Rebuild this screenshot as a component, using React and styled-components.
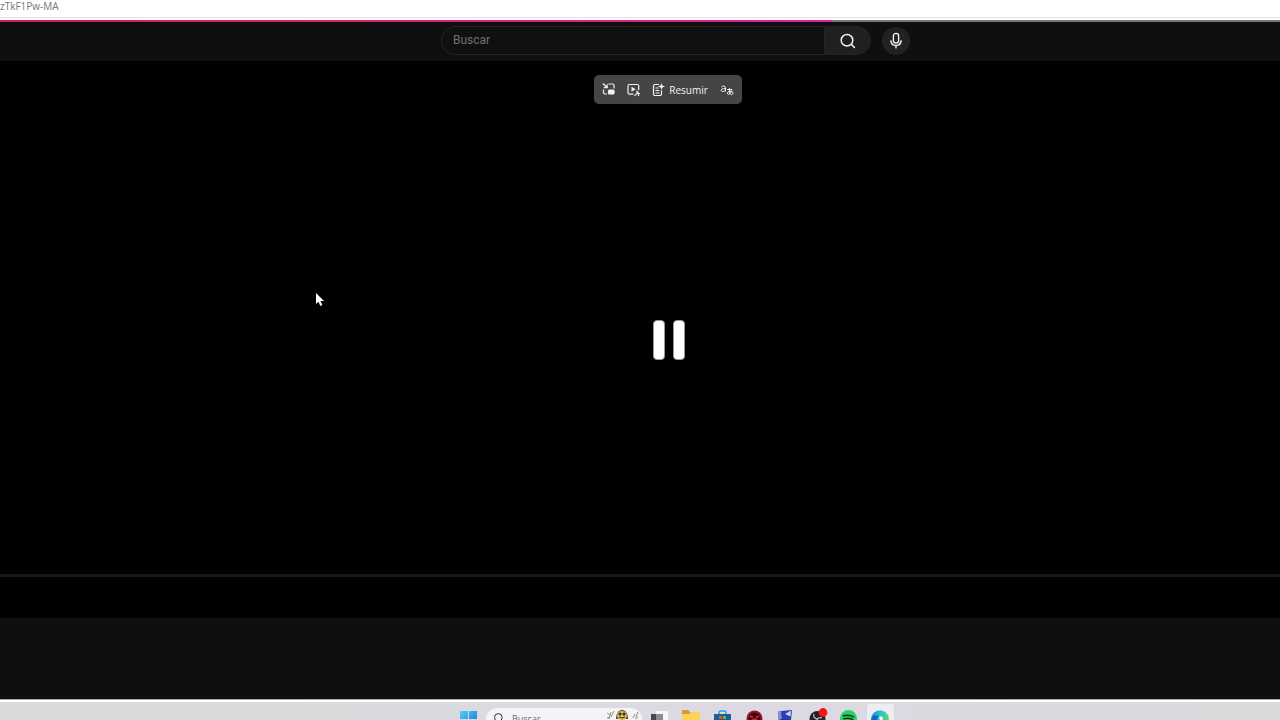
import React from 'react';
import styled, { createGlobalStyle } from 'styled-components';

const GlobalStyle = createGlobalStyle`
  * {
    box-sizing: border-box;
  }
  body {
    margin: 0;
    background: #000000;
    font-family: "Open Sans", "Noto Sans", sans-serif;
  }
  button {
    border: 0;
    padding: 0;
    background: none;
    color: inherit;
    font-family: inherit;
  }
  svg {
    display: block;
    flex: none;
  }
`;

const Page = styled.div`
  position: relative;
  display: flex;
  flex-direction: column;
  height: 100vh;
  overflow: hidden;
`;

const AddressBar = styled.div`
  flex: none;
  height: 18px;
  background: #ffffff;
  border-bottom: 1px solid #e4dfe6;
  color: #77777a;
  font-size: 10px;
  line-height: 13px;
`;

const LoadingTrack = styled.div`
  flex: none;
  height: 4px;
  padding-top: 2px;
  background: linear-gradient(#ffffff 2px, #77777a 2px);
`;

const LoadingBar = styled.div`
  width: 65%;
  height: 2px;
  background: linear-gradient(90deg, #c92455, #d62878 60%, #e020a0);
`;

const Masthead = styled.header`
  flex: none;
  display: flex;
  align-items: center;
  justify-content: center;
  gap: 11px;
  height: 39px;
  padding: 0 0 2px 71px;
  background: #0f0f0f;
`;

const SearchForm = styled.form`
  display: flex;
  width: 430px;
  height: 29px;
`;

const SearchInput = styled.input`
  flex: 1;
  min-width: 0;
  padding: 0 11px 2px;
  border: 1px solid #242424;
  border-right: 0;
  border-radius: 15px 0 0 15px;
  background: #101010;
  color: #eeeeee;
  font-family: Roboto, sans-serif;
  font-size: 12px;
  &::placeholder {
    color: #707070;
    opacity: 1;
  }
`;

const SearchButton = styled.button`
  display: flex;
  align-items: center;
  justify-content: center;
  width: 47px;
  border: 1px solid #242424;
  border-radius: 0 15px 15px 0;
  background: #202020;
  color: #f1f1f1;
`;

const VoiceButton = styled.button`
  display: flex;
  align-items: center;
  justify-content: center;
  width: 28px;
  height: 28px;
  border-radius: 50%;
  background: #222222;
  color: #f1f1f1;
`;

const Player = styled.main`
  flex: 1;
  display: flex;
  flex-direction: column;
  align-items: center;
  padding-top: 14px;
  background: #000000;
`;

const VideoToolbar = styled.div`
  display: flex;
  align-items: center;
  height: 29px;
  margin-left: 56px;
  padding: 0 8px;
  gap: 12px;
  border-radius: 5px;
  background: #454545;
  color: #f2f2f2;
`;

const ToolButton = styled.button`
  display: flex;
  align-items: center;
  gap: 4px;
  height: 24px;
  font-size: 10px;
  line-height: 14px;
`;

const Stage = styled.div`
  flex: 1;
  display: flex;
  align-items: center;
  justify-content: center;
  padding: 1px 0 0 57px;
`;

const PauseButton = styled.button`
  display: flex;
  gap: 8px;
`;

const PauseBar = styled.span`
  width: 12px;
  height: 40px;
  border: 1px solid #999999;
  border-radius: 4px;
  background: #ffffff;
`;

const Timeline = styled.div`
  flex: none;
  align-self: stretch;
  height: 3px;
  background: #191919;
`;

const Controls = styled.div`
  flex: none;
  height: 41px;
`;

const Details = styled.section`
  flex: none;
  height: 81px;
  background: #0f0f0f;
`;

const WindowEdge = styled.div`
  flex: none;
  height: 3px;
  border-top: 1px solid #aaaaaa;
  background: #ffffff;
`;

const Taskbar = styled.footer`
  flex: none;
  display: flex;
  align-items: flex-start;
  justify-content: center;
  height: 18px;
  padding-left: 70px;
  overflow: hidden;
  background: linear-gradient(90deg, #dadada 20%, #dcd9e2 40%, #dcd9e2 65%, #dadadc);
`;

const StartButton = styled.button`
  display: flex;
  justify-content: center;
  width: 28px;
  padding-top: 9px;
`;

const TaskSearch = styled.label`
  display: flex;
  align-items: center;
  width: 156px;
  height: 22px;
  margin: 6px 2px 0 4px;
  padding: 0 2px 2px 7px;
  border-radius: 11px;
  background: #f4f3f8;
  color: #333333;
`;

const TaskInput = styled.input`
  flex: 1;
  min-width: 0;
  padding: 0 0 0 7px;
  border: 0;
  background: none;
  font-family: "Open Sans", sans-serif;
  font-size: 9px;
  &::placeholder {
    color: #6c6c70;
    opacity: 1;
  }
`;

const TaskList = styled.nav`
  display: grid;
  grid-template-columns: repeat(8, 1fr);
  justify-items: center;
  width: 252px;
`;

const TaskButton = styled.button`
  display: flex;
  justify-content: center;
  width: 27px;
  height: 32px;
  margin-top: 2px;
  padding-top: 6px;
  border-radius: 3px;
  background: ${({ $active }) => ($active ? '#eeedf3' : 'none')};
`;

const Pointer = styled.svg`
  position: absolute;
  top: 292px;
  left: 315px;
`;

const SearchIcon = ({ size = 18 }) => (
  <svg width={size} height={size} viewBox="0 0 18 18" fill="none" stroke="currentColor" strokeWidth="1.5">
    <circle cx="8" cy="8.2" r="5.8" />
    <path d="M12.2 12.300l3.600 3.600" />
  </svg>
);

const MicIcon = () => (
  <svg width="18" height="18" viewBox="0 0 18 18" fill="none" stroke="currentColor" strokeWidth="1.4">
    <rect x="6.4" y="1.4" width="5.2" height="9.6" rx="2.6" />
    <path d="M3.9 8.2c0 3.2 2.1 5.2 5.1 5.2s5.1-2 5.1-5.2M9 13.4v3.2" />
  </svg>
);

const PipIcon = () => (
  <svg width="13" height="13" viewBox="0 0 13 13" fill="none" stroke="currentColor" strokeWidth="1.2">
    <path d="M1 .5l4 4M5.2 1.200v3.400H1.800M6.500 1h4A1.500 1.500 0 0 1 12 2.500v3M1.500 6.500v3A1.500 1.500 0 0 0 3 11h2" />
    <rect x="6.500" y="7" width="5.500" height="4" rx="1" fill="currentColor" />
  </svg>
);

const EnhanceIcon = () => (
  <svg width="13" height="14" viewBox="0 0 13 14" fill="none" stroke="currentColor" strokeWidth="1.200">
    <path d="M6.500 11.200h-4A1.500 1.500 0 0 1 1 9.700V3a1.500 1.500 0 0 1 1.500-1.500h7.700A1.500 1.500 0 0 1 11.700 3v4" />
    <path d="M4.500 3.700v5l4.200-2.500z" fill="currentColor" stroke="none" />
    <path d="M7.500 12.800l4-4M10 7.500v2.500M10 10.500h3M11.500 11v2" />
  </svg>
);

const SummaryIcon = () => (
  <svg width="13" height="14" viewBox="0 0 13 14" fill="none" stroke="currentColor" strokeWidth="1.200">
    <path d="M7 1.500H3A1.500 1.500 0 0 0 1.500 3v8A1.500 1.500 0 0 0 3 12.500h5A1.500 1.500 0 0 0 9.500 11V7.500M3.500 5h3M3.500 7.500h4M3.500 10h4" />
    <path d="M9.500 0l.9 2.600 2.600.9-2.600.9-.9 2.600-.9-2.600L6 3.500l2.600-.9z" fill="currentColor" stroke="none" />
  </svg>
);

const TranslateIcon = () => (
  <svg width="14" height="14" viewBox="0 0 14 14" fill="none" stroke="currentColor" strokeWidth="1">
    <path d="M1.500 4c1-1.500 4-1.300 4 .8V8.500M5.500 5.600C3 5.500 1.200 6 1.200 7.200c0 2 3.800 1.500 4.300-.4" />
    <path d="M7.300 6.500h5M9.500 5c-.3 2.500 0 4.500.9 6.500M11.800 7.500c-.6 2-2 3.700-3.300 3.700-2 0-1.200-3 1.500-3 4 0 3.800 3 1.200 3.600" />
  </svg>
);

const WindowsIcon = () => (
  <svg width="17" height="17" viewBox="0 0 17 17">
    <defs>
      <linearGradient id="win" x2="1" y2="1">
        <stop stopColor="#55d0f5" />
        <stop offset="1" stopColor="#0c6fd0" />
      </linearGradient>
    </defs>
    <path d="M0 0h8v8H0zM9 0h8v8H9zM0 9h8v8H0zM9 9h8v8H9z" fill="url(#win)" />
  </svg>
);

const SearchHighlight = () => (
  <svg width="34" height="20" viewBox="0 0 34 20">
    <path d="M1 5l3 2M5 4l-2 7M8 3L5 9M1 10l3-1M27 10l2-4M30 9l2-5M29 11l3-2" stroke="#918b7c" fill="none" />
    <path d="M10 11c0-5 2-9 6-9s6 4 6 9z" fill="#594522" />
    <ellipse cx="16" cy="7.500" rx="5" ry="4.500" fill="#d9b75c" />
    <circle cx="14" cy="6" r="1.500" fill="#352a1b" />
    <circle cx="18" cy="6" r="1.500" fill="#352a1b" />
    <path d="M13 9q3 2 6 0" stroke="#352a1b" fill="none" />
  </svg>
);

const TaskViewIcon = () => (
  <svg width="17" height="17" viewBox="0 0 17 17">
    <path d="M5 1h12v11H5z" fill="#f7f7f9" />
    <path d="M0 4h12v11H0z" fill="#8c8c90" />
    <path d="M0 4h5v11H0z" fill="#45454a" />
  </svg>
);

const FolderIcon = () => (
  <svg width="18" height="17" viewBox="0 0 18 17">
    <path d="M0 1.500C0 .7.700 0 1.500 0H6l2 2h8.500c.8 0 1.500.7 1.500 1.500V8H0z" fill="#d69b26" />
    <path d="M0 4h7l2-2h9v13H0z" fill="#fcd459" />
  </svg>
);

const StoreIcon = () => (
  <svg width="17" height="17" viewBox="0 0 17 17">
    <path d="M5 4V2.500C5 1.500 5.500 1 6.500 1h4c1 0 1.500.5 1.500 1.500V4" fill="none" stroke="#2aa6e8" strokeWidth="1.500" />
    <path d="M0 4h17v10a3 3 0 0 1-3 3H3a3 3 0 0 1-3-3z" fill="#1c5d9f" />
    <path d="M5 6h3v3H5z" fill="#f25022" />
    <path d="M9 6h3v3H9z" fill="#7fba00" />
    <path d="M5 10h3v3H5z" fill="#00a4ef" />
    <path d="M9 10h3v3H9z" fill="#ffb900" />
  </svg>
);

const RedAppIcon = () => (
  <svg width="17" height="17" viewBox="0 0 17 17">
    <circle cx="8.500" cy="8.500" r="8" fill="#a30e22" />
    <circle cx="8.500" cy="8.500" r="6" fill="#3b0710" />
    <path d="M4 6l3 1.500M13 6l-3 1.500M5 11q3.500-4 7 0" stroke="#d8283c" strokeWidth="1.500" fill="none" />
  </svg>
);

const ComputerIcon = () => (
  <svg width="17" height="17" viewBox="0 0 17 17">
    <path d="M1 1h5v14H1z" fill="#7d90cf" />
    <path d="M4 1l11-1-1 10-9 1z" fill="#2740b8" />
    <path d="M8 4l6-3.500-.5 6z" fill="#c9d4fa" />
    <path d="M3 9l11 1 2 6H2z" fill="#1f2e83" />
  </svg>
);

const RecorderIcon = () => (
  <svg width="17" height="18" viewBox="0 0 17 18" overflow="visible">
    <circle cx="8.500" cy="9" r="8" fill="#222225" />
    <path d="M5 4c-1 3 1 5 4 5M13 8c-3-1-5 0-5 4M4 11c2 2 5 1 6-1" stroke="#c9c9cd" strokeWidth="1.200" fill="none" />
    <circle cx="14" cy="2.500" r="4.400" fill="#f5141c" />
  </svg>
);

const MusicIcon = () => (
  <svg width="17" height="17" viewBox="0 0 17 17">
    <circle cx="8.500" cy="8.500" r="8.500" fill="#29d163" />
    <path d="M3.500 5.800q5.500-1.500 10 1M4 8.700q4.500-1.300 8.500.8M4.500 11.500q4-1 7 .7" stroke="#10301a" strokeWidth="1.500" fill="none" strokeLinecap="round" />
  </svg>
);

const EdgeIcon = () => (
  <svg width="18" height="18" viewBox="0 0 18 18">
    <defs>
      <linearGradient id="edge" x2="1" y2="0">
        <stop stopColor="#1687d0" />
        <stop offset="0.500" stopColor="#2cc0d2" />
        <stop offset="1" stopColor="#62d56a" />
      </linearGradient>
    </defs>
    <circle cx="9" cy="9" r="8.800" fill="url(#edge)" />
    <path d="M.3 9C1 6 5 4.500 8 6c-3 2-3 8 2 11.500C4 18 .3 14 .3 9z" fill="#1268ba" />
    <path d="M8.500 6.500c2-.7 4 .8 3.500 2.500-.3 1-1 1.300-.5 2-2 .5-4-2.500-3-4.500z" fill="#e9f7fa" />
  </svg>
);

const tasks = [
  { label: 'Vista de tareas', Icon: TaskViewIcon },
  { label: 'Explorador de archivos', Icon: FolderIcon },
  { label: 'Microsoft Store', Icon: StoreIcon },
  { label: 'Juego', Icon: RedAppIcon },
  { label: 'Equipo', Icon: ComputerIcon },
  { label: 'OBS Studio', Icon: RecorderIcon },
  { label: 'Spotify', Icon: MusicIcon },
  { label: 'Microsoft Edge', Icon: EdgeIcon, active: true }
];

export default function App() {
  return (
    <Page>
      <GlobalStyle />
      <AddressBar>zTkF1Pw-MA</AddressBar>
      <LoadingTrack>
        <LoadingBar />
      </LoadingTrack>
      <Masthead>
        <SearchForm role="search" onSubmit={(e) => e.preventDefault()}>
          <SearchInput type="text" placeholder="Buscar" aria-label="Buscar" />
          <SearchButton type="submit" aria-label="Buscar">
            <SearchIcon />
          </SearchButton>
        </SearchForm>
        <VoiceButton type="button" aria-label="Buscar por voz">
          <MicIcon />
        </VoiceButton>
      </Masthead>
      <Player>
        <VideoToolbar>
          <ToolButton type="button" aria-label="Imagen en imagen"><PipIcon /></ToolButton>
          <ToolButton type="button" aria-label="Mejorar video"><EnhanceIcon /></ToolButton>
          <ToolButton type="button">
            <SummaryIcon />
            <span>Resumir</span>
          </ToolButton>
          <ToolButton type="button" aria-label="Traducir"><TranslateIcon /></ToolButton>
        </VideoToolbar>
        <Stage>
          <PauseButton type="button" aria-label="Pausa">
            <PauseBar />
            <PauseBar />
          </PauseButton>
        </Stage>
        <Timeline />
        <Controls />
      </Player>
      <Details />
      <WindowEdge />
      <Taskbar>
        <StartButton type="button" aria-label="Inicio"><WindowsIcon /></StartButton>
        <TaskSearch>
          <SearchIcon size={12} />
          <TaskInput type="text" placeholder="Buscar" aria-label="Buscar en Windows" />
          <SearchHighlight />
        </TaskSearch>
        <TaskList>
          {tasks.map(({ label, Icon, active }) => (
            <TaskButton key={label} type="button" aria-label={label} $active={active}>
              <Icon />
            </TaskButton>
          ))}
        </TaskList>
      </Taskbar>
      <Pointer width="10" height="16" viewBox="0 0 10 16">
        <path d="M1 1v11l2.500-2.300L5.300 14l2-1-1.800-4H9z" fill="#ffffff" />
      </Pointer>
    </Page>
  );
}
